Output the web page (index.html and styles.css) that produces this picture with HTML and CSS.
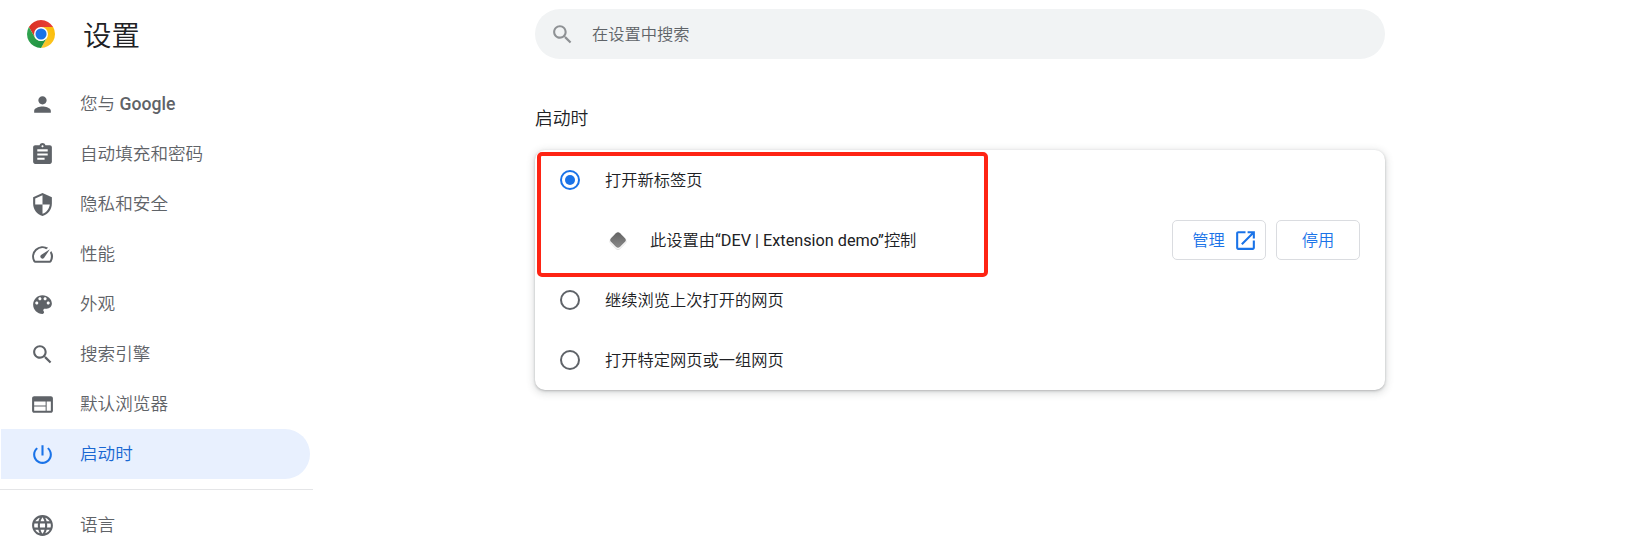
FILE: index.html
```html
<!DOCTYPE html>
<html lang="zh-CN">
<head>
<meta charset="utf-8">
<title>设置</title>
<link rel="stylesheet" href="styles.css">
</head>
<body>
<div class="page">
  <aside class="sidebar">
    <header class="brand">
      <svg class="logo" viewBox="0 0 48 48">
        <defs>
          <linearGradient id="red" x1="0" x2="1"><stop offset="0" stop-color="#d93025"/><stop offset="1" stop-color="#ea4335"/></linearGradient>
          <linearGradient id="yellow" x1="0" y1="1" x2="1" y2="0"><stop offset="0" stop-color="#fcc934"/><stop offset="1" stop-color="#fbbc04"/></linearGradient>
          <linearGradient id="green" x1="1" y1="1" x2="0" y2="0"><stop offset="0" stop-color="#1e8e3e"/><stop offset="1" stop-color="#34a853"/></linearGradient>
        </defs>
        <path fill="url(#red)" d="M24 12h20.78A24 24 0 0 0 3.22 12l10.39 18z"/>
        <path fill="url(#yellow)" d="M34.39 30 24 48a24 24 0 0 0 20.78-36H24z"/>
        <path fill="url(#green)" d="M13.61 30 3.22 12A24 24 0 0 0 24 48l10.39-18A12 12 0 0 1 13.61 30z"/>
        <circle cx="24" cy="24" r="12" fill="#fff"/>
        <circle cx="24" cy="24" r="9.5" fill="#1a73e8"/>
      </svg>
      <h1 class="title">设置</h1>
    </header>
    <nav class="menu">
      <a class="item"><svg class="icon" viewBox="0 0 24 24"><path d="M12 12c2.21 0 4-1.79 4-4s-1.79-4-4-4-4 1.79-4 4 1.79 4 4 4zm0 2c-2.67 0-8 1.34-8 4v2h16v-2c0-2.66-5.33-4-8-4z"/></svg><span class="label">您与 <b class="latin">Google</b></span></a>
      <a class="item"><svg class="icon" viewBox="0 0 24 24"><path d="M19 3h-4.18C14.4 1.84 13.3 1 12 1c-1.3 0-2.4.84-2.82 2H5c-1.1 0-2 .9-2 2v14c0 1.1.9 2 2 2h14c1.1 0 2-.9 2-2V5c0-1.1-.9-2-2-2zm-7 0c.55 0 1 .45 1 1s-.45 1-1 1-1-.45-1-1 .45-1 1-1zm2 14H7v-2h7v2zm3-4H7v-2h10v2zm0-4H7V7h10v2z"/></svg><span class="label">自动填充和密码</span></a>
      <a class="item"><svg class="icon" viewBox="0 0 24 24"><path d="M12 1 3 5v6c0 5.55 3.84 10.74 9 12 5.16-1.26 9-6.45 9-12V5l-9-4zm0 10.99h7c-.53 4.12-3.28 7.79-7 8.94V12H5V6.3l7-3.11v8.8z"/></svg><span class="label">隐私和安全</span></a>
      <a class="item"><svg class="icon" viewBox="0 0 24 24"><path d="m20.38 8.57-1.23 1.85a8 8 0 0 1-.22 7.58H5.07A8 8 0 0 1 15.58 6.85l1.85-1.23A10 10 0 0 0 3.35 19a2 2 0 0 0 1.72 1h13.85a2 2 0 0 0 1.74-1 10 10 0 0 0-.27-10.44zm-9.79 6.84a2 2 0 0 0 2.83 0l5.66-8.49-8.49 5.66a2 2 0 0 0 0 2.83z"/></svg><span class="label">性能</span></a>
      <a class="item"><svg class="icon" viewBox="0 0 24 24"><path d="M12 3c-4.97 0-9 4.03-9 9s4.03 9 9 9c.83 0 1.5-.67 1.5-1.5 0-.39-.15-.74-.39-1.01-.23-.26-.38-.61-.38-.99 0-.83.67-1.5 1.5-1.5H16c2.76 0 5-2.24 5-5 0-4.42-4.03-8-9-8zm-5.5 9c-.83 0-1.5-.67-1.5-1.5S5.67 9 6.500 9 8 9.670 8 10.500 7.330 12 6.500 12zm3-4C8.670 8 8 7.330 8 6.500S8.670 5 9.500 5s1.500.67 1.500 1.500S10.330 8 9.500 8zm5 0c-.83 0-1.500-.67-1.500-1.500S13.670 5 14.500 5s1.500.67 1.500 1.500S15.330 8 14.500 8zm3 4c-.83 0-1.500-.67-1.500-1.500S16.670 9 17.500 9s1.500.67 1.500 1.500-.67 1.500-1.500 1.500z"/></svg><span class="label">外观</span></a>
      <a class="item"><svg class="icon" viewBox="0 0 24 24"><path d="M15.500 14h-.79l-.28-.27C15.410 12.590 16 11.110 16 9.500 16 5.910 13.090 3 9.500 3S3 5.910 3 9.500 5.910 16 9.500 16c1.610 0 3.090-.59 4.230-1.570l.27.28v.79l5 4.990L20.490 19l-4.990-5zm-6 0C7.010 14 5 11.990 5 9.500S7.010 5 9.500 5 14 7.010 14 9.500 11.990 14 9.500 14z"/></svg><span class="label">搜索引擎</span></a>
      <a class="item"><svg class="icon" viewBox="0 0 24 24"><path d="M20 4H4c-1.100 0-1.990.9-1.990 2L2 18c0 1.100.9 2 2 2h16c1.100 0 2-.9 2-2V6c0-1.100-.9-2-2-2zm-5 14H4v-4h11v4zm0-5H4V9h11v4zm5 5h-4V9h4v9z"/></svg><span class="label">默认浏览器</span></a>
      <a class="item selected"><svg class="icon" viewBox="0 0 24 24"><path d="M13 3h-2v10h2V3zm4.830 2.170-1.420 1.420C17.990 7.860 19 9.810 19 12c0 3.870-3.130 7-7 7s-7-3.130-7-7c0-2.190 1.010-4.140 2.580-5.420L6.170 5.170C4.230 6.820 3 9.260 3 12c0 4.970 4.030 9 9 9s9-4.030 9-9c0-2.740-1.230-5.180-3.170-6.830z"/></svg><span class="label">启动时</span></a>
    </nav>
    <nav class="menu advanced">
      <a class="item"><svg class="icon" viewBox="0 0 24 24"><path d="M11.990 2C6.470 2 2 6.480 2 12s4.470 10 9.990 10C17.520 22 22 17.520 22 12S17.520 2 11.990 2zm6.930 6h-2.950c-.32-1.250-.78-2.450-1.380-3.560 1.840.63 3.370 1.910 4.330 3.560zM12 4.040c.83 1.200 1.480 2.530 1.910 3.960h-3.820c.43-1.430 1.080-2.760 1.910-3.960zM4.260 14C4.100 13.360 4 12.690 4 12s.1-1.360.26-2h3.380c-.08.66-.14 1.320-.14 2s.06 1.340.14 2H4.260zm.82 2h2.950c.32 1.250.78 2.450 1.380 3.560-1.840-.63-3.370-1.900-4.330-3.560zm2.950-8H5.080c.96-1.660 2.490-2.930 4.330-3.560C8.810 5.550 8.350 6.750 8.030 8zM12 19.960c-.83-1.200-1.480-2.530-1.910-3.960h3.820c-.43 1.430-1.080 2.760-1.910 3.960zM14.340 14H9.660c-.09-.66-.16-1.320-.16-2s.07-1.350.16-2h4.680c.09.65.16 1.320.16 2s-.07 1.340-.16 2zm.25 5.560c.6-1.110 1.060-2.310 1.380-3.560h2.950c-.96 1.650-2.490 2.930-4.330 3.560zM16.360 14c.08-.66.14-1.320.14-2s-.06-1.340-.14-2h3.380c.16.64.26 1.310.26 2s-.1 1.360-.26 2h-3.380z"/></svg><span class="label">语言</span></a>
    </nav>
  </aside>
  <main class="main">
    <div class="search">
      <svg class="icon" viewBox="0 0 24 24"><path d="M15.500 14h-.79l-.28-.27C15.410 12.590 16 11.110 16 9.500 16 5.910 13.090 3 9.500 3S3 5.910 3 9.500 5.910 16 9.500 16c1.610 0 3.090-.59 4.230-1.570l.27.28v.79l5 4.990L20.490 19l-4.990-5zm-6 0C7.010 14 5 11.990 5 9.500S7.010 5 9.500 5 14 7.010 14 9.500 11.990 14 9.500 14z"/></svg>
      <span class="placeholder">在设置中搜索</span>
    </div>
    <h2 class="section-title">启动时</h2>
    <section class="card">
      <div class="row"><span class="radio checked"></span><span class="text">打开新标签页</span></div>
      <div class="row controlled">
        <svg class="extension" viewBox="0 0 20 20">
          <defs><linearGradient id="ext" x1="0" y1="0" x2="1" y2="1"><stop offset="0" stop-color="#606060"/><stop offset="1" stop-color="#8c8c8c"/></linearGradient></defs>
          <rect x="3" y="4.200" width="14" height="14" rx="3" transform="rotate(45 10 11.200)" fill="#e2e2e2"/>
          <rect x="3" y="3.200" width="14" height="14" rx="3" transform="rotate(45 10 10.200)" fill="#fbfbfb"/>
          <rect x="3.700" y="3.700" width="12.600" height="12.600" rx="3" transform="rotate(45 10 10)" fill="url(#ext)"/>
        </svg>
        <span class="text">此设置由<span class="regular">“DEV | Extension demo”</span>控制</span>
        <div class="actions">
          <button class="button manage"><span>管理</span><svg class="icon" viewBox="0 0 24 24"><path d="M19 19H5V5h7V3H5c-1.110 0-2 .9-2 2v14c0 1.100.89 2 2 2h14c1.100 0 2-.9 2-2v-7h-2v7zM14 3v2h3.590l-9.830 9.830 1.410 1.410L19 6.410V10h2V3h-7z"/></svg></button>
          <button class="button"><span>停用</span></button>
        </div>
      </div>
      <div class="row"><span class="radio"></span><span class="text">继续浏览上次打开的网页</span></div>
      <div class="row"><span class="radio"></span><span class="text">打开特定网页或一组网页</span></div>
      <div class="highlight"></div>
    </section>
  </main>
</div>
</body>
</html>
```
FILE: styles.css
```css
* { box-sizing: border-box; }

body {
  margin: 0;
  height: 541px;
  overflow: hidden;
  background: #fff;
  color: #202124;
  font-family: Roboto, "Noto Sans CJK SC DemiLight", "Noto Sans CJK SC", sans-serif;
  font-size: 16.250px;
  font-weight: 350;
}

.page { display: flex; height: 541px; overflow: hidden; }

.sidebar { width: 313px; flex: none; }

.brand {
  display: flex;
  align-items: center;
  gap: 28px;
  height: 70px;
  padding-left: 27px;
}

.logo { width: 28px; height: 28px; margin-top: -2px; }

.title { margin: 0; padding-top: 3px; font-size: 28.500px; font-weight: 350; line-height: 40px; }

.menu { display: flex; flex-direction: column; padding: 9px 3px 9px 1px; }

.advanced { border-top: 1px solid #e4e5e7; padding-top: 10px; margin-top: 1px; }

.item {
  display: flex;
  align-items: center;
  gap: 25px;
  flex: none;
  height: 50px;
  padding-left: 29px;
  border-radius: 0 25px 25px 0;
  color: #5f6368;
  font-size: 17.600px;
}

.label { padding-bottom: 3px; }

.selected { background: #e8f0fe; color: #1967d2; }
.selected .icon { fill: #1a73e8; }

.icon { display: block; width: 25px; height: 25px; flex: none; fill: currentColor; }
.item .icon { margin-top: 1px; }

.latin { font-weight: 500; }

.main { width: 850px; margin-left: 222px; padding-top: 9px; }

.search {
  display: flex;
  align-items: center;
  gap: 17px;
  height: 50px;
  padding-left: 15px;
  border-radius: 25px;
  background: #f1f3f4;
  color: #5f6368;
}

.search .icon { fill: #8e9194; }

.placeholder, .text, .button span { padding-bottom: 2px; }
.text .regular { padding: 0; font-weight: 400; }

.section-title { margin: 47px 0 19px; font-size: 17.800px; font-weight: 350; line-height: 25px; }

.card {
  position: relative;
  height: 240px;
  border-radius: 10px;
  background: #fff;
  box-shadow: 0 1px 2.500px rgba(60, 64, 67, .3), 0 2px 7px 2px rgba(60, 64, 67, .15);
}

.row { display: flex; align-items: center; height: 60px; padding: 0 25px; }

.radio {
  display: grid;
  place-items: center;
  width: 20px;
  height: 20px;
  margin-right: 25px;
  border: 2px solid #5f6368;
  border-radius: 50%;
}

.checked { border-color: #1a73e8; }
.checked::after { content: ""; width: 10px; height: 10px; border-radius: 50%; background: #1a73e8; }

.controlled { padding-left: 72.500px; }
.extension { width: 20px; height: 20px; margin-right: 22.500px; }

.actions { display: flex; gap: 10px; margin-left: auto; }

.button {
  display: flex;
  align-items: center;
  justify-content: center;
  width: 84px;
  height: 40px;
  padding: 0;
  border: 1px solid #dadce0;
  border-radius: 5px;
  background: #fff;
  color: #1a73e8;
  font: inherit;
}

.manage { width: 94px; gap: 8px; padding-left: 12px; }

.highlight {
  position: absolute;
  left: 1.500px;
  top: 2px;
  width: 451px;
  height: 125px;
  border: 4px solid #fe2414;
  border-radius: 5px;
}
```
